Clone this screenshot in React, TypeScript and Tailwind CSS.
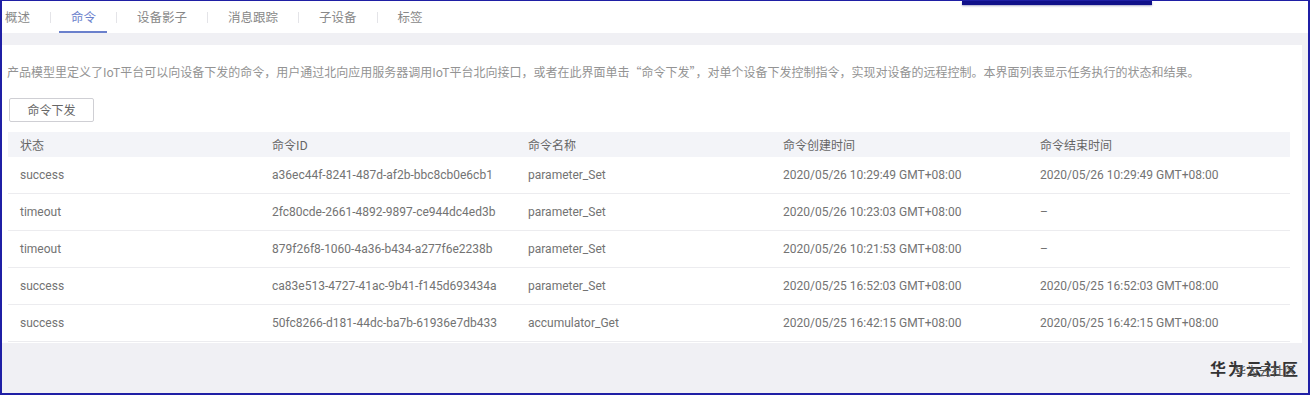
import React from 'react';

const tabs = ['概述', '命令', '设备影子', '消息跟踪', '子设备', '标签'];

const columns = ['状态', '命令ID', '命令名称', '命令创建时间', '命令结束时间'];

const rows = [
  ['success', 'a36ec44f-8241-487d-af2b-bbc8cb0e6cb1', 'parameter_Set', '2020/05/26 10:29:49 GMT+08:00', '2020/05/26 10:29:49 GMT+08:00'],
  ['timeout', '2fc80cde-2661-4892-9897-ce944dc4ed3b', 'parameter_Set', '2020/05/26 10:23:03 GMT+08:00', '–'],
  ['timeout', '879f26f8-1060-4a36-b434-a277f6e2238b', 'parameter_Set', '2020/05/26 10:21:53 GMT+08:00', '–'],
  ['success', 'ca83e513-4727-41ac-9b41-f145d693434a', 'parameter_Set', '2020/05/25 16:52:03 GMT+08:00', '2020/05/25 16:52:03 GMT+08:00'],
  ['success', '50fc8266-d181-44dc-ba7b-61936e7db433', 'accumulator_Get', '2020/05/25 16:42:15 GMT+08:00', '2020/05/25 16:42:15 GMT+08:00'],
];

const cjk = "font-['Noto_Sans_CJK_SC',sans-serif]";
const latin = "font-['Roboto','Noto_Sans_CJK_SC',sans-serif]";
const grid = 'grid grid-cols-[252px_256px_255px_257px_1fr]';

const App: React.FC = () => {
  return (
    <div className="relative w-[1310px] h-[395px] overflow-hidden bg-[#f0f0f4] border-t border-l-2 border-r-2 border-b-2 border-[#1f1fa5] flex flex-col">
      {/* dark bar peeking in from above */}
      <div className="absolute left-[960px] top-0 w-[190px] h-[4px] bg-[#10108a] shadow-[0_1px_2px_rgba(40,40,120,0.4)]" />

      {/* tabs */}
      <div className={`h-[32px] bg-white flex items-center pl-[3px] ${cjk} text-[12.5px] shrink-0`}>
        {tabs.map((t, i) => (
          <React.Fragment key={t}>
            {i > 0 && <span className="w-px h-[11px] bg-[#e4e4e8]" />}
            <div className={`relative h-full flex items-center ${i === 0 ? 'pr-5' : 'px-5'}`}>
              <span className={i === 1 ? 'text-[#6a80cc]' : 'text-[#888]'}>{t}</span>
              {i === 1 && <span className="absolute left-[8px] right-[9px] bottom-0 h-[2px] bg-[#6a80cc]" />}
            </div>
          </React.Fragment>
        ))}
      </div>

      {/* main card */}
      <div className="mt-3 mr-[6px] h-[298px] bg-white pl-[5px] pt-[20px] shrink-0">
        <p className={`${cjk} text-[12px] leading-[14px] text-[#939393] whitespace-nowrap`}>
          产品模型里定义了IoT平台可以向设备下发的命令，用户通过北向应用服务器调用IoT平台北向接口，或者在此界面单击“命令下发”，对单个设备下发控制指令，实现对设备的远程控制。本界面列表显示任务执行的状态和结果。
        </p>

        <button className={`mt-[19px] ml-[2px] w-[85px] h-[24px] border border-[#cfcfd4] rounded-[2px] bg-white ${cjk} text-[12px] text-[#666]`}>
          命令下发
        </button>

        <div className="mt-[10px] ml-px w-[1282px]">
          <div className={`${grid} h-[25px] items-center bg-[#f3f4f8] ${cjk} text-[12px] text-[#666]`}>
            {columns.map((c) => (
              <div key={c} className="pl-3">{c}</div>
            ))}
          </div>
          {rows.map((r, i) => (
            <div key={i} className={`${grid} h-[37px] items-center border-b border-[#ececef] ${latin} text-[12px] text-[#737373]`}>
              {r.map((v, j) => (
                <div key={j} className="pl-3 whitespace-nowrap">{v}</div>
              ))}
            </div>
          ))}
        </div>
      </div>

      {/* watermark */}
      <div className="flex-1 flex items-center justify-end pr-[8px]">
        <div className={`relative ${cjk}`}>
          <span className="text-[16px] font-bold text-[#333] tracking-[2px]">华为云社区</span>
          <span className="absolute left-[24px] top-[6px] text-[12px] text-[#555] tracking-[0.5px] whitespace-nowrap">华为云社区</span>
        </div>
      </div>
    </div>
  );
};

export default App;
